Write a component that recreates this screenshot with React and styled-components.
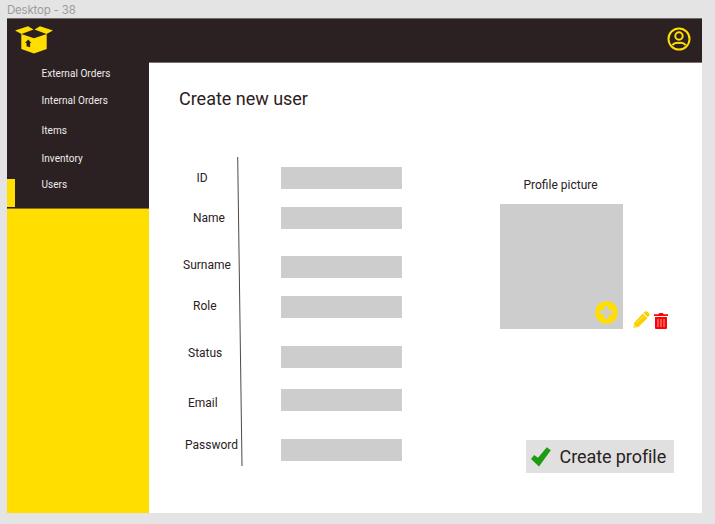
import React from "react";
import styled, { createGlobalStyle } from "styled-components";

const ink = "#2b2122";
const yellow = "#ffde00";

const GlobalStyle = createGlobalStyle`
  * { box-sizing: border-box; }
  body {
    margin: 0;
    background: #e4e4e4;
    color: ${ink};
    font-family: "Roboto", "Noto Sans", sans-serif;
  }
`;

const Canvas = styled.div`
  width: 715px;
  height: 524px;
  padding-left: 7px;
  overflow: hidden;
`;

const FrameName = styled.div`
  height: 18px;
  padding-top: 2px;
  font: 11.5px/16px "Inter", sans-serif;
  letter-spacing: -0.2px;
  color: #9c9c9c;
`;

const Frame = styled.div`
  width: 695px;
  height: 495px;
  background: #fff;
`;

const Header = styled.header`
  display: flex;
  justify-content: space-between;
  height: 44px;
  padding: 7px 11px 0 8px;
  background: ${ink};
  border-top: 1px solid #706a6a;
`;

const Columns = styled.div`
  display: grid;
  grid-template-columns: 142px 1fr;
  height: 451px;
`;

const Sidebar = styled.aside`
  background: ${yellow};
`;

const Nav = styled.nav`
  display: flex;
  flex-direction: column;
  height: 147px;
  padding-top: 1px;
  background: ${ink};
  border-bottom: 1px solid #857411;
`;

const NavItem = styled.a`
  height: ${(p) => p.$height}px;
  padding: ${(p) => p.$top}px 0 0 ${(p) => (p.$active ? 26.5 : 34.5)}px;
  border-left: ${(p) => (p.$active ? `8px solid ${yellow}` : "none")};
  font-size: 10px;
  line-height: 12px;
  letter-spacing: 0.05px;
  color: #eeecec;
`;

const Main = styled.main`
  display: grid;
  grid-template-columns: 321px 1fr;
  grid-template-rows: 94px 1fr;
  padding-left: 30px;
  border-top: 1px solid #777172;
`;

const Title = styled.h1`
  grid-column: 1 / -1;
  margin: 0;
  padding-top: 24px;
  font-size: 18px;
  font-weight: 400;
  line-height: 24px;
  letter-spacing: -0.02px;
`;

const Form = styled.form`
  display: grid;
  grid-template-columns: 58px 44px 121px;
  align-items: start;
`;

const Stack = styled.div`
  display: flex;
  flex-direction: column;
  padding-top: ${(p) => p.$top}px;
`;

const Label = styled.label`
  height: ${(p) => p.$height}px;
  padding-left: ${(p) => p.$indent}px;
  font-size: 12px;
  line-height: 16px;
  white-space: nowrap;
`;

const Field = styled.div`
  height: 22px;
  margin-bottom: ${(p) => p.$gap}px;
  background: #cdcdcd;
`;

const Divider = styled.svg`
  display: block;
  width: 8px;
  height: 310px;
`;

const Side = styled.section`
  display: flex;
  flex-direction: column;
  align-items: flex-start;
  padding-top: 20px;
`;

const PictureLabel = styled.div`
  margin-left: 23.5px;
  font-size: 12px;
  line-height: 16px;
`;

const PictureRow = styled.div`
  display: flex;
  align-items: flex-end;
  margin-top: 10.5px;
`;

const Picture = styled.div`
  display: flex;
  align-items: flex-end;
  justify-content: flex-end;
  width: 123px;
  height: 125.5px;
  padding: 0 5px 5px 0;
  background: #cdcdcd;
`;

const Glyph = styled.svg`
  display: block;
  flex: none;
  width: ${(p) => p.$w}px;
  height: ${(p) => p.$h}px;
  margin: ${(p) => p.$margin || "0"};
`;

const CreateButton = styled.div`
  display: flex;
  align-items: center;
  width: 148px;
  height: 33px;
  margin: 111px 0 0 26px;
  padding-left: 4.5px;
  background: #e0e0e0;
  font-size: 18px;
  line-height: 24px;
  letter-spacing: -0.08px;
  white-space: nowrap;
`;

const navItems = [
  { text: "External Orders", height: 26, top: 5 },
  { text: "Internal Orders", height: 30, top: 6 },
  { text: "Items", height: 29, top: 6 },
  { text: "Inventory", height: 31, top: 5 },
  { text: "Users", height: 28, top: 0, active: true },
];

const labels = [
  { text: "ID", height: 40, indent: 17.5 },
  { text: "Name", height: 47, indent: 14 },
  { text: "Surname", height: 41, indent: 4 },
  { text: "Role", height: 47, indent: 14 },
  { text: "Status", height: 50, indent: 9 },
  { text: "Email", height: 42, indent: 9 },
  { text: "Password", height: 16, indent: 6 },
];

const fieldGaps = [18, 27, 18, 28, 21, 28, 0];

const BoxLogo = () => (
  <Glyph $w={38} $h={28} viewBox="0 0 38 28">
    <path
      fill={yellow}
      d="M0 4.500 13 .3l5.500 3.200L6.500 8ZM19.500 3.500 25 .3l13 4.200L31.500 8ZM6.300 8 19 12.200 31.700 8V23L19 27.600 6.300 23Z"
    />
    <path
      fill={ink}
      d="m13.300 13.500 3.200 3.700-1.400-.2v4.200l-3.600-.9v-3.300l-1.500-.3Z"
    />
  </Glyph>
);

const Avatar = () => (
  <Glyph
    $w={24}
    $h={24}
    $margin="1px 0 0"
    viewBox="0 0 24 24"
    fill="none"
    stroke={yellow}
    strokeWidth="2"
  >
    <circle cx="12" cy="12" r="10.500" />
    <circle cx="12" cy="9" r="3.700" />
    <path d="M5.300 18.200c2-2.500 4-2.800 6.700-2.200 2.700-.6 4.700-.3 6.700 2.200" />
  </Glyph>
);

const Plus = () => (
  <Glyph $w={23} $h={23} viewBox="0 0 23 23">
    <circle cx="11.500" cy="11.500" r="11.300" fill={yellow} />
    <path d="M11.500 5v13M5 11.500h13" stroke="#cdcdcd" strokeWidth="3.800" />
  </Glyph>
);

const Pencil = () => (
  <Glyph $w={17} $h={17} $margin="0 0 1.500px 9.500px" viewBox="0 0 17 17">
    <path
      fill="#fbd000"
      d="m9.800 2.600 4.600 4.600L5.300 16 .4 16.700l.8-4.900ZM10.500 2l1.700-1.400q1-.8 2 0l2 1.900q.9 1 0 2L15 6.500Z"
    />
    <path d="m3.500 12 7-7" stroke="#ffe978" strokeWidth=".7" />
    <path d="m1.600 13.700 1.600 1.600-1.900.4Z" fill="#fff3b5" />
  </Glyph>
);

const Trash = () => (
  <Glyph $w={14} $h={16} $margin="0 0 0.500px 4px" viewBox="0 0 14 16">
    <path
      fill="#fa0505"
      d="M0 1.200h4.300L5.200 0h3.600l.9 1.200H14V3H0ZM1 4h12v11q0 1-1 1H2q-1 0-1-1Z"
    />
    <path d="M4 6v8M7 6v8M10 6v8" stroke="#ffa0a0" strokeWidth="1" />
  </Glyph>
);

const Check = () => (
  <Glyph $w={20} $h={20} $margin="0 9px 0 0" viewBox="0 0 20 20">
    <path fill="#1d9b12" d="m0 11.900 3.200-3.900 3.800 2.700L15.800.3l4 3L8 19.500Z" />
  </Glyph>
);

export default function App() {
  return (
    <Canvas>
      <GlobalStyle />
      <FrameName>Desktop - 38</FrameName>
      <Frame>
        <Header>
          <BoxLogo />
          <Avatar />
        </Header>
        <Columns>
          <Sidebar>
            <Nav>
              {navItems.map((n) => (
                <NavItem key={n.text} $height={n.height} $top={n.top} $active={n.active}>
                  {n.text}
                </NavItem>
              ))}
            </Nav>
          </Sidebar>
          <Main>
            <Title>Create new user</Title>
            <Form>
              <Stack $top={13}>
                {labels.map((l) => (
                  <Label key={l.text} $height={l.height} $indent={l.indent}>
                    {l.text}
                  </Label>
                ))}
              </Stack>
              <Divider viewBox="0 0 8 310">
                <path d="M.7 0 5 309" stroke="#3a3435" strokeWidth=".9" />
              </Divider>
              <Stack $top={10}>
                {fieldGaps.map((gap, i) => (
                  <Field key={labels[i].text} $gap={gap} />
                ))}
              </Stack>
            </Form>
            <Side>
              <PictureLabel>Profile picture</PictureLabel>
              <PictureRow>
                <Picture>
                  <Plus />
                </Picture>
                <Pencil />
                <Trash />
              </PictureRow>
              <CreateButton>
                <Check />
                Create profile
              </CreateButton>
            </Side>
          </Main>
        </Columns>
      </Frame>
    </Canvas>
  );
}
